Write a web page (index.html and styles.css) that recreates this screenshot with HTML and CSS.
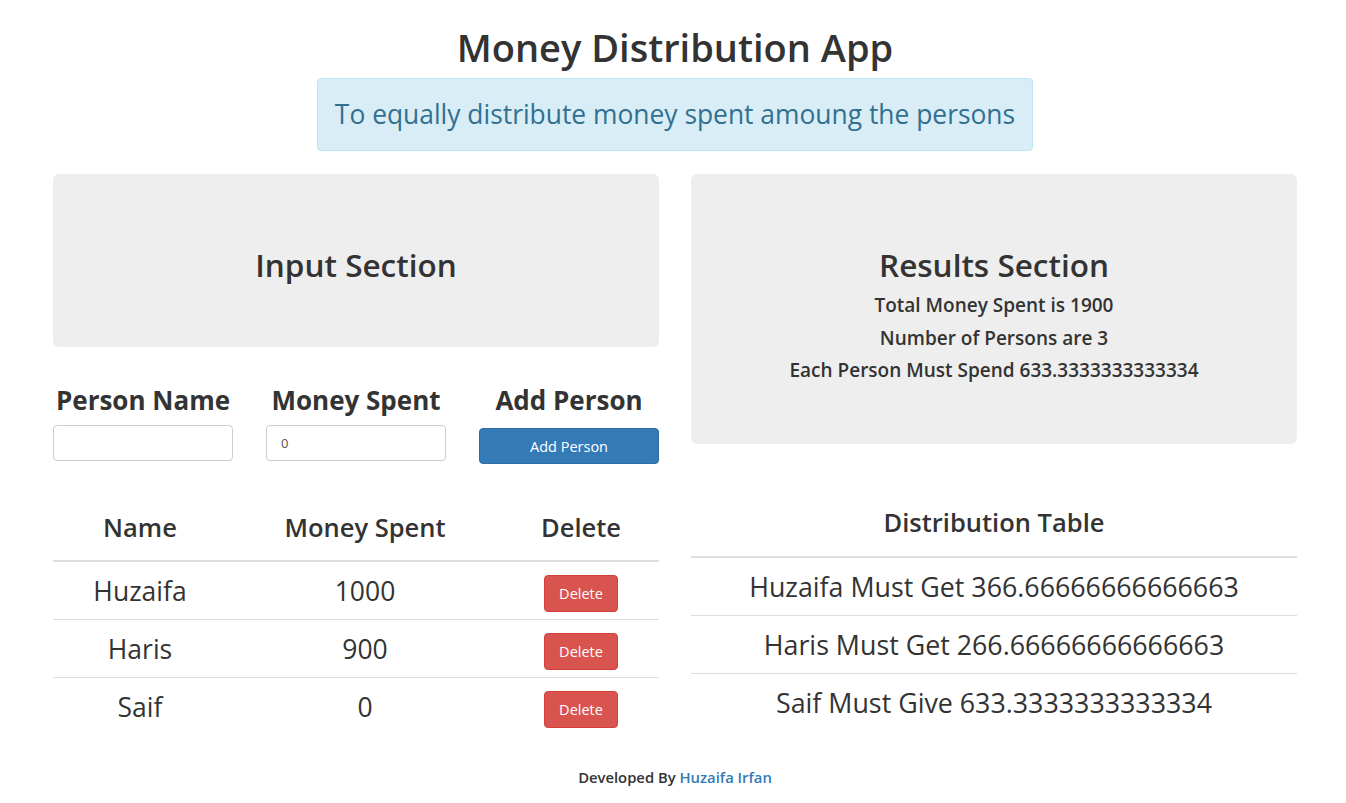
FILE: index.html
```html
<!DOCTYPE html>
<html lang="en">
<head>
<meta charset="utf-8">
<title>Money Distribution App</title>
<link rel="stylesheet" href="styles.css">
</head>
<body>
<div class="page">
  <h1 class="title">Money Distribution App</h1>
  <div class="alert">To equally distribute money spent amoung the persons</div>

  <div class="columns">
    <section class="col">
      <div class="jumbo jumbo-input">
        <h2 class="jumbo-title">Input Section</h2>
      </div>

      <div class="form-row">
        <div class="field">
          <label class="field-label" for="pname">Person Name</label>
          <input class="text-input" id="pname" type="text">
        </div>
        <div class="field">
          <label class="field-label" for="pmoney">Money Spent</label>
          <input class="text-input" id="pmoney" type="number" value="0">
        </div>
        <div class="field">
          <span class="field-label">Add Person</span>
          <button class="btn btn-primary" type="button">Add Person</button>
        </div>
      </div>

      <table class="people">
        <colgroup>
          <col class="c-name"><col class="c-money"><col class="c-del">
        </colgroup>
        <thead>
          <tr><th>Name</th><th>Money Spent</th><th>Delete</th></tr>
        </thead>
        <tbody>
          <tr><td>Huzaifa</td><td>1000</td><td class="btn-cell"><button class="btn btn-danger" type="button">Delete</button></td></tr>
          <tr><td>Haris</td><td>900</td><td class="btn-cell"><button class="btn btn-danger" type="button">Delete</button></td></tr>
          <tr><td>Saif</td><td>0</td><td class="btn-cell"><button class="btn btn-danger" type="button">Delete</button></td></tr>
        </tbody>
      </table>
    </section>

    <section class="col">
      <div class="jumbo jumbo-results">
        <h2 class="jumbo-title">Results Section</h2>
        <p class="result-line">Total Money Spent is 1900</p>
        <p class="result-line">Number of Persons are 3</p>
        <p class="result-line">Each Person Must Spend 633.3333333333334</p>
      </div>

      <table class="dist">
        <thead>
          <tr><th>Distribution Table</th></tr>
        </thead>
        <tbody>
          <tr><td>Huzaifa Must Get 366.66666666666663</td></tr>
          <tr><td>Haris Must Get 266.66666666666663</td></tr>
          <tr><td>Saif Must Give 633.3333333333334</td></tr>
        </tbody>
      </table>
    </section>
  </div>

  <footer class="footer">Developed By <a class="footer-link" href="#">Huzaifa Irfan</a></footer>
</div>
</body>
</html>
```

FILE: styles.css
```css
* { box-sizing: border-box; }

body {
  margin: 0;
  font-family: "Open Sans", "Noto Sans", sans-serif;
  color: #333;
  background: #fff;
}

.page {
  width: 1244px;
  margin-left: 53px;
}

.title {
  margin: 27px 0 11px;
  font-size: 38px;
  font-weight: 600;
  line-height: 40px;
  text-align: center;
}

.alert {
  width: fit-content;
  margin: 0 auto;
  height: 73px;
  padding: 0 17px;
  line-height: 71px;
  font-size: 26.4px;
  color: #31708f;
  background: #d9edf7;
  border: 1px solid #bce8f1;
  border-radius: 4px;
}

.columns {
  margin-top: 23px;
  display: grid;
  grid-template-columns: 606px 606px;
  column-gap: 32px;
  align-items: start;
}

.jumbo {
  background: #eee;
  border-radius: 6px;
  text-align: center;
  padding-top: 74px;
}

.jumbo-input { height: 173px; }
.jumbo-results { height: 270px; }

.jumbo-title {
  margin: 0;
  font-size: 31.5px;
  font-weight: 600;
  line-height: 33px;
}

.result-line {
  margin: 0;
  font-size: 19px;
  font-weight: 600;
  line-height: 32.5px;
}

.jumbo-title + .result-line { margin-top: 8px; }

.form-row {
  margin-top: 38px;
  display: grid;
  grid-template-columns: 180px 180px 180px;
  column-gap: 33px;
}

.field {
  display: flex;
  flex-direction: column;
  align-items: stretch;
}

.field-label {
  display: block;
  font-size: 26px;
  font-weight: 700;
  line-height: 30px;
  text-align: center;
  margin-bottom: 10px;
}

.text-input {
  height: 36px;
  width: 100%;
  padding: 0 14px;
  font-family: "Open Sans", "Noto Sans", sans-serif;
  font-size: 13px;
  color: #555;
  border: 1px solid #ccc;
  border-radius: 4px;
  background: #fff;
  -moz-appearance: textfield;
}

.text-input::-webkit-outer-spin-button,
.text-input::-webkit-inner-spin-button {
  -webkit-appearance: none;
  margin: 0;
}

.btn {
  font-family: "Open Sans", "Noto Sans", sans-serif;
  font-size: 14.5px;
  color: #fff;
  border-radius: 4px;
  cursor: pointer;
  padding: 0;
}

.btn-primary {
  margin-top: 3px;
  height: 36px;
  width: 100%;
  background: #337ab7;
  border: 1px solid #2e6da4;
}

.btn-danger {
  width: 74px;
  height: 37px;
  background: #d9534f;
  border: 1px solid #d43f3a;
}

.people,
.dist {
  width: 100%;
  border-collapse: collapse;
  text-align: center;
}

.people { margin-top: 33px; }

.c-name { width: 174px; }
.c-money { width: 276px; }
.c-del { width: 156px; }

.people th,
.dist th {
  font-size: 25.5px;
  font-weight: 600;
  line-height: 30px;
  padding: 15px 0 18px;
  border-bottom: 2px solid #ddd;
  vertical-align: bottom;
}

.people td {
  height: 58px;
  padding: 2px 0 0;
  font-size: 26.5px;
  vertical-align: middle;
}

.people tbody tr + tr td,
.dist tbody tr + tr td {
  border-top: 1px solid #ddd;
  height: 58px;
}

.people td.btn-cell { padding-top: 2px; }

.dist { margin-top: 48px; }

.dist th { padding: 15px 0 19px; }

.dist td {
  height: 58px;
  padding: 0;
  font-size: 26.8px;
  vertical-align: middle;
}

.footer {
  margin-top: 32px;
  text-align: center;
  font-size: 14.8px;
  font-weight: 600;
  line-height: 20px;
}

.footer-link {
  color: #337ab7;
  text-decoration: none;
}
```
